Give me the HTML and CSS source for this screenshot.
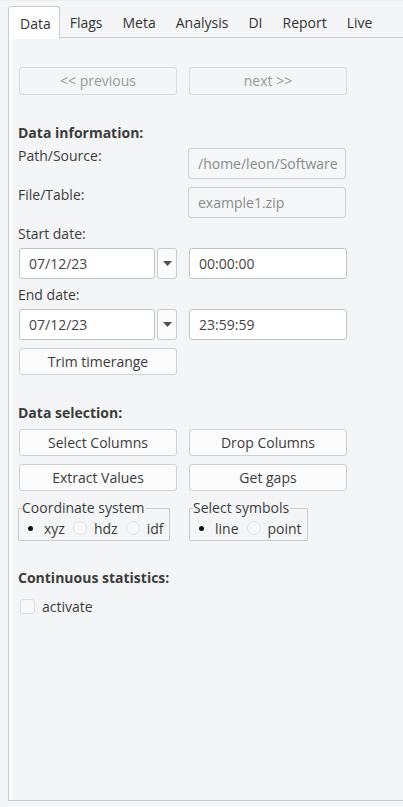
FILE: index.html
```html
<!DOCTYPE html>
<html>
<head>
<meta charset="utf-8">
<link rel="stylesheet" href="styles.css">
</head>
<body>
<div class="tabbar">
  <div class="tab active">Data</div>
  <div class="tab">Flags</div>
  <div class="tab">Meta</div>
  <div class="tab">Analysis</div>
  <div class="tab">DI</div>
  <div class="tab">Report</div>
  <div class="tab">Live</div>
</div>
<div class="panel">
  <div class="row nav">
    <div class="btn disabled">&lt;&lt; previous</div>
    <div class="btn disabled">next &gt;&gt;</div>
  </div>

  <div class="heading h-info">Data information:</div>
  <div class="row form-row r-path">
    <div class="col label">Path/Source:</div>
    <div class="field readonly">/home/leon/Software</div>
  </div>
  <div class="row form-row r-file">
    <div class="col label">File/Table:</div>
    <div class="field readonly">example1.zip</div>
  </div>

  <div class="label sub s-start">Start date:</div>
  <div class="row date-row">
    <div class="col date-col">
      <div class="field date">07/12/23</div>
      <div class="drop"><svg width="9" height="5" viewBox="0 0 9 5"><path d="M0 0h9L4.5 5z" fill="#505050"/></svg></div>
    </div>
    <div class="field">00:00:00</div>
  </div>
  <div class="label sub s-end">End date:</div>
  <div class="row date-row">
    <div class="col date-col">
      <div class="field date">07/12/23</div>
      <div class="drop"><svg width="9" height="5" viewBox="0 0 9 5"><path d="M0 0h9L4.5 5z" fill="#505050"/></svg></div>
    </div>
    <div class="field">23:59:59</div>
  </div>
  <div class="row r-trim">
    <div class="btn">Trim timerange</div>
  </div>

  <div class="heading h-sel">Data selection:</div>
  <div class="row r-b1">
    <div class="btn">Select Columns</div>
    <div class="btn">Drop Columns</div>
  </div>
  <div class="row r-b2">
    <div class="btn">Extract Values</div>
    <div class="btn">Get gaps</div>
  </div>

  <div class="groups">
    <fieldset class="group g-coord">
      <legend>Coordinate system</legend>
      <div class="radios">
        <span class="radio on"></span><span class="rtext">xyz</span>
        <span class="radio"></span><span class="rtext">hdz</span>
        <span class="radio"></span><span class="rtext">idf</span>
      </div>
    </fieldset>
    <fieldset class="group g-sym">
      <legend>Select symbols</legend>
      <div class="radios">
        <span class="radio on"></span><span class="rtext">line</span>
        <span class="radio"></span><span class="rtext">point</span>
      </div>
    </fieldset>
  </div>

  <div class="heading h-cont">Continuous statistics:</div>
  <div class="check-row">
    <span class="check"></span><span class="ctext">activate</span>
  </div>
</div>
</body>
</html>
```

FILE: styles.css
```css
html, body {
  margin: 0;
  padding: 0;
}
body {
  background: #f4f5f7;
  font-family: "Open Sans", "Noto Sans", sans-serif;
  font-size: 14px;
  color: #3c3c3c;
  width: 403px;
  height: 807px;
  overflow: hidden;
  border-top: 1px solid #eceef0;
  box-sizing: border-box;
}
.tabbar {
  display: flex;
  margin-left: 8px;
  margin-top: 5px;
  height: 31px;
  border-bottom: 1px solid #c9cbcd;
}
.tab {
  padding: 0 10px;
  line-height: 34px;
  height: 32px;
  color: #333;
}
.tab.active {
  background: #fff;
  border: 1px solid #c9cbcd;
  border-bottom: none;
  border-radius: 3px 3px 0 0;
  padding: 0 8px 0 11px;
  height: 32px;
  line-height: 33px;
}
.panel {
  margin-left: 8px;
  height: 762px;
  border-left: 1px solid #c9cbcd;
  border-bottom: 1px solid #c9cbcd;
  box-shadow: inset 3px 0 0 #ffffff;
  padding-left: 10px;
  display: flex;
  flex-direction: column;
  align-items: flex-start;
}
.row {
  display: flex;
  gap: 12px;
}
.col {
  width: 158px;
  flex: none;
}
.btn {
  width: 158px;
  height: 27px;
  box-sizing: border-box;
  border: 1px solid #cfd1d3;
  border-radius: 3px;
  background: #fbfbfc;
  text-align: center;
  line-height: 25px;
  color: #3c3c3c;
}
.btn.disabled {
  background: #f4f5f7;
  color: #9a9a9a;
  border-color: #d9dbdd;
  height: 28px;
  line-height: 26px;
}
.nav { margin-top: 29px; }
.heading {
  font-weight: 700;
  line-height: 18px;
  margin-left: -1px;
}
.h-info { margin-top: 29px; }
.label {
  line-height: 16px;
  margin-left: -1px;
}
.field {
  width: 158px;
  height: 31px;
  box-sizing: border-box;
  border: 1px solid #c2c4c6;
  border-radius: 3px;
  background: #fff;
  padding: 0 9px;
  line-height: 29px;
  white-space: nowrap;
  overflow: hidden;
  color: #444;
}
.field.readonly {
  background: #f6f7f8;
  color: #8a8a8a;
  border-color: #cdcfd1;
}
.r-path { margin-top: 6px; }
.r-file { margin-top: 8px; }
.sub { line-height: 18px; }
.s-start { margin-top: 7px; }
.s-end { margin-top: 7px; }
.date-row { margin-top: 5px; }
.date-col {
  display: flex;
  gap: 2px;
}
.field.date { width: 136px; }
.drop {
  width: 20px;
  height: 31px;
  box-sizing: border-box;
  border: 1px solid #c9cbcd;
  border-radius: 3px;
  background: #fbfbfc;
  display: flex;
  align-items: center;
  justify-content: center;
}
.r-trim { margin-top: 8px; }
.h-sel { margin-top: 29px; }
.r-b1 { margin-top: 7px; }
.r-b2 { margin-top: 8px; }
.groups {
  display: flex;
  gap: 19px;
  margin-top: 9px;
  margin-left: -1px;
}
.group {
  margin: 0;
  padding: 0 0 0 4px;
  border: 1px solid #c9cbcd;
  border-radius: 1px;
  min-width: 0;
  height: 41px;
  box-sizing: border-box;
}
.g-coord { width: 152px; }
.g-sym { width: 119px; }
.group legend {
  padding: 0 1px 0 0;
  margin-left: -1px;
  line-height: 16px;
  color: #3c3c3c;
}
.radios {
  display: flex;
  align-items: center;
  height: 24px;
}
.radio {
  width: 14px;
  height: 14px;
  box-sizing: border-box;
  border: 1px solid #e2e3e5;
  border-radius: 50%;
  background: #f8f8f9;
  margin-right: 7px;
  flex: none;
  display: flex;
  align-items: center;
  justify-content: center;
}
.radio.on {
  border-color: transparent;
  background: transparent;
}
.radio.on::after {
  content: "";
  width: 5px;
  height: 5px;
  border-radius: 50%;
  background: #111;
}
.rtext { margin-right: 8px; }
.h-cont { margin-top: 28px; }
.check-row {
  display: flex;
  align-items: center;
  margin-top: 12px;
  margin-left: 1px;
}
.check {
  width: 15px;
  height: 15px;
  box-sizing: border-box;
  border: 1px solid #dcdee0;
  border-radius: 3px;
  background: #f8f8f9;
  margin-right: 7px;
}
.ctext { line-height: 15px; }
```
